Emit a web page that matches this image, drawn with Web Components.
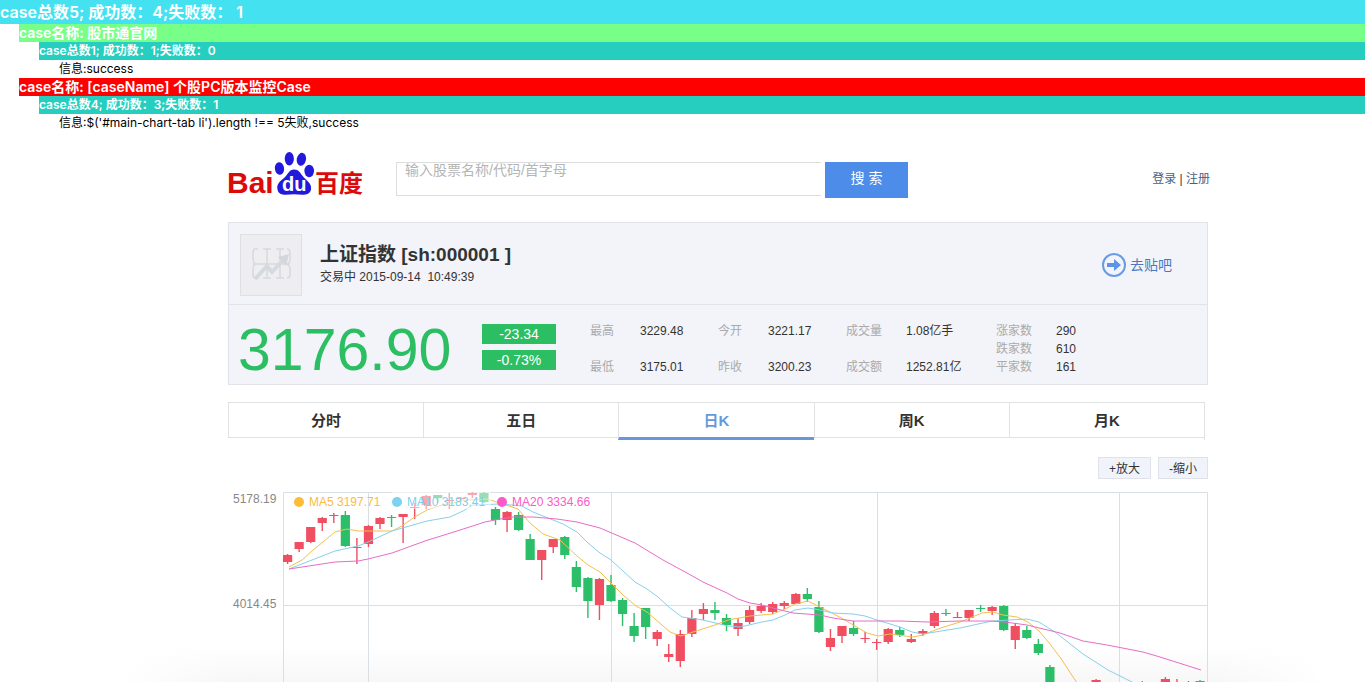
<!DOCTYPE html>
<html lang="zh-CN">
<head>
<meta charset="utf-8">
<title>股市通</title>
<style>
html,body{margin:0;padding:0;background:#fff}
body{font-family:"Liberation Sans","Noto Sans CJK SC",sans-serif;font-size:12px;color:#333}
</style>
</head>
<body>
<monitor-report>
  <report-row kind="total">case总数5; 成功数：4;失败数： 1</report-row>
  <report-row kind="pass">case名称: 股市通官网</report-row>
  <report-row kind="count">case总数1; 成功数：1;失败数：0</report-row>
  <report-row kind="info">信息:success</report-row>
  <report-row kind="fail">case名称: [caseName] 个股PC版本监控Case</report-row>
  <report-row kind="count">case总数4; 成功数：3;失败数：1</report-row>
  <report-row kind="info">信息:$('#main-chart-tab li').length !== 5失败,success</report-row>
</monitor-report>
<stock-page>
  <search-header></search-header>
  <stock-summary></stock-summary>
  <chart-tabs></chart-tabs>
  <k-chart></k-chart>
</stock-page>
<script>
const define = (name, html, setup) => customElements.define(name, class extends HTMLElement {
  constructor() {
    super();
    const t = document.createElement('template');
    t.innerHTML = html;
    this.attachShadow({mode: 'open'}).append(t.content.cloneNode(true));
    if (setup) setup(this.shadowRoot);
  }
});

define('monitor-report', `<style>:host{display:block;font-family:"Century Gothic","Inter","Noto Sans CJK SC",sans-serif}</style><slot></slot>`);

define('report-row', `<style>
:host{display:block;height:18px;line-height:18px;white-space:nowrap;color:#fff;font-weight:600}
:host([kind=total]){height:24px;line-height:24px;font-size:16px;background:#44e2f1}
:host([kind=pass]),:host([kind=fail]){margin-left:19px;font-size:14px}
:host([kind=pass]){background:#78ff88}
:host([kind=fail]){background:#f00}
:host([kind=count]){margin-left:39px;font-size:12px;background:#25cebe}
:host([kind=info]){margin-left:59px;font-size:12px;font-weight:400;color:#000}
</style><slot></slot>`);

define('stock-page', `<style>
:host{display:block;padding-left:71px;background:linear-gradient(90deg,#fff 9%,#fff0 17%,#fff0 89%,#fff 97%),linear-gradient(0deg,#f7f7f7,#fff 36px)}
main{max-width:980px;margin:0 auto}
</style><main><slot></slot></main>`);

define('search-header', `<style>
:host{display:flex;align-items:flex-start;height:72px;padding-top:18px}
.logo{display:block;width:136px;height:46px;margin-right:32px}
.logo svg{display:block;overflow:visible}
form{display:flex;margin-top:12px}
input{box-sizing:border-box;width:425px;height:34px;border:1px solid #ddd;border-right:0;padding:0 8px 18px;font:14px/14px "Liberation Sans","Noto Sans CJK SC",sans-serif;outline:0;border-radius:0;background:#fff}
input::placeholder{color:#b5b5b5}
button{width:83px;height:36px;margin:0 0 0 4px;border:0;padding:0 0 6px;background:#4d8ce8;color:#fff;font:14px "Liberation Sans","Noto Sans CJK SC",sans-serif;white-space:pre}
nav{margin:20px -2px 0 auto;line-height:18px;white-space:nowrap}
a{color:#4b5f82;text-decoration:none}
</style>
<a class="logo" href="#" aria-label="百度">
<svg width="136" height="46" viewBox="0 0 136 46">
<g fill="#2319dc">
<ellipse cx="51.500" cy="18.500" rx="4.600" ry="6.400" transform="rotate(-8 51.500 18.500)"/>
<ellipse cx="61.300" cy="8.700" rx="4.600" ry="6.700"/>
<ellipse cx="73.400" cy="9.300" rx="4.600" ry="6.500" transform="rotate(12 73.400 9.300)"/>
<ellipse cx="81.200" cy="21" rx="4.800" ry="6.200"/>
<path d="M66 19.500C61 19.500 60 24.500 56 28C51 32 48.500 34.500 49.500 39.500C51 46 57 45 66 44.300C75 45 81.500 46 83 39.500C84 33.500 79 31 75.500 27C72 23 71 19.500 66 19.500Z"/></g>
<text x="54" y="41" font-family="Liberation Sans" font-size="20" font-weight="700" fill="#fff">du</text>
<text x="-1" y="43" font-family="Liberation Sans" font-size="30" font-weight="700" fill="#dc0a0a">Bai</text>
<text x="87" y="42" font-family="Noto Sans CJK SC" font-size="24" font-weight="700" fill="#dc0a0a">百度</text>
</svg></a>
<form onsubmit="return false"><input type="text" aria-label="股票搜索" placeholder="输入股票名称/代码/首字母"><button type="submit">搜 索</button></form>
<nav><a href="#">登录</a> | <a href="#">注册</a></nav>`);

define('stock-summary', `<style>
:host{display:block;box-sizing:border-box;border:1px solid #e1e3e8;background:#f3f4f9}
header{display:flex;align-items:center;box-sizing:border-box;height:82px;padding:2px 35px 0 11px;border-bottom:1px solid #e1e3e8}
.pic{box-sizing:border-box;width:62px;height:62px;border:1px solid #dfe0e4;background:#eeeef0;margin-right:18px}
.pic svg{display:block}
h1{margin:0;font-size:19px;line-height:24px}
p{margin:0;line-height:20px;white-space:pre}
.bar{display:flex;align-items:center;gap:4px;margin-left:auto;font-size:14px;line-height:18px;color:#4a78bf;text-decoration:none}
section{display:flex;height:79px;align-items:flex-start}
.price{width:253px;box-sizing:border-box;padding:15px 0 0 9px;font-size:59px;line-height:60px;color:#2cbe63}
.chg{width:74px;display:grid;gap:6px;margin:19px 34px 0 0}
.chg span{background:#2cbe63;color:#fff;font-size:14px;line-height:20px;text-align:center}
table{border-collapse:collapse;margin-top:17px;table-layout:fixed;width:516px}
th,td{padding:0;line-height:18px;height:18px;text-align:left;font-weight:400;white-space:nowrap}
th{color:#aaa}
</style>
<header><div class="pic"><svg width="60" height="60" viewBox="0 0 60 60" fill="none" stroke="#d6d9dd">
<path stroke-width="1.500" d="M17 14H14Q12 14 12 18V24Q12 27 14 29Q12 31 12 34V40Q12 43 15 43H18M12 29H49M12 18V24M22 14H30M26 14V43M22 43H30M35 14H43M39 14V43M35 43H43M46 14Q49 14 49 18V24Q49 28 46 29Q49 31 49 34V40Q49 43 46 43"/>
<path stroke-width="4" d="M14 44L26 31L31 37L43 24"/><path fill="#d3d6db" stroke="none" d="M37 22L48 19L45 31Z"/></svg></div>
<div><h1>上证指数 [sh:000001 ]</h1><p>交易中 2015-09-14  10:49:39</p></div>
<a class="bar" href="#"><svg width="24" height="24" viewBox="0 0 24 24"><circle cx="12" cy="12" r="11" fill="none" stroke="#699be3" stroke-width="2"/><path fill="#5b94e8" d="M5 10H12V6L19 12L12 18V14H5Z"/></svg>去贴吧</a></header>
<section><div class="price">3176.90</div><div class="chg"><span>-23.34</span><span>-0.73%</span></div>
<table><colgroup><col style="width:50px"><col style="width:78px"><col style="width:50px"><col style="width:78px"><col style="width:60px"><col style="width:90px"><col style="width:60px"><col style="width:50px"></colgroup>
<tr><th>最高</th><td>3229.48</td><th>今开</th><td>3221.17</td><th>成交量</th><td>1.08亿手</td><th>涨家数</th><td>290</td></tr>
<tr><td></td><td></td><td></td><td></td><td></td><td></td><th>跌家数</th><td>610</td></tr>
<tr><th>最低</th><td>3175.01</td><th>昨收</th><td>3200.23</td><th>成交额</th><td>1252.81亿</td><th>平家数</th><td>161</td></tr>
</table></section>`);

define('chart-tabs', `<style>
:host{display:block;margin-top:17px}
.tabs{display:grid;grid-template-columns:repeat(5,1fr);height:38px;margin-right:3px;border-right:1px solid #e0e2e4}
.tabs button{box-sizing:border-box;height:36px;margin:0;padding:0 0 2px;border:solid #e0e2e4;border-width:1px 0 1px 1px;background:#fff;color:#333;font:700 15px "Liberation Sans","Noto Sans CJK SC",sans-serif}
.tabs button[aria-selected=true]{height:38px;border-bottom:3px solid #6898dc;color:#6898dc}
.zoom{display:flex;justify-content:flex-end;gap:7px;margin-top:17px}
.zoom button{box-sizing:border-box;height:22px;padding:0 10px 2px;border:1px solid #dfe2ea;background:#f0f3fa;color:#333;font:12px "Liberation Sans","Noto Sans CJK SC",sans-serif}
</style>
<div class="tabs" role="tablist"><button role="tab">分时</button><button role="tab">五日</button><button role="tab" aria-selected="true">日K</button><button role="tab">周K</button><button role="tab">月K</button></div>
<div class="zoom"><button>+放大</button><button>-缩小</button></div>`);

// Each candle: direction, body top, body bottom, wick top, wick bottom.
const candles = `r 555 562 554 564|r 542 549 542 552|r 527 542 527 543|r 518 523 517 531|r 515 516 513 523|g 515 546 511 547|r 547 548 538 564|r 526 544 525 547|r 518 524 517 529|g 517 518 515 527|r 514 517 514 543|r 507 508 503 519|r 496 505 495 509|g 495 498 495 503|r 500 501 493 509|r 498 499 497 502|r 493 495 492 498|g 493 502 492 503|g 509 520 507 525|r 512 520 511 532|g 515 530 512 531|g 539 560 534 560|r 550 560 550 580|r 539 547 539 553|g 537 555 536 559|g 567 587 561 592|g 578 601 577 618|r 579 605 578 620|g 585 601 575 602|g 600 614 598 626|g 626 636 613 642|g 608 627 608 639|r 632 639 630 646|r 654 657 644 662|r 634 661 630 667|r 618 634 610 637|r 609 614 603 620|g 610 613 602 620|g 618 625 614 631|r 623 629 618 636|r 610 622 606 624|r 606 611 603 613|r 604 612 602 614|r 603 606 601 609|r 594 604 593 604|g 594 599 588 602|g 607 632 601 633|r 638 647 629 651|r 626 636 626 643|g 628 634 621 636|r 638 639 632 643|r 642 643 639 650|r 629 642 628 644|g 630 635 627 637|r 639 642 634 643|r 631 634 629 636|r 613 626 611 628|g 613 614 609 616|r 617 618 612 618|r 610 618 610 621|g 608 609 605 612|r 607 611 606 615|g 606 630 605 631|r 626 640 623 649|g 630 638 626 639|g 644 653 639 655|g 667 690 665 690||||r 680 690 679 690||||g 690 691 681 691||r 679 690 677 690|r 690 691 679 690|r 690 691 681 690|g 681 690 680 690`.split('|');
const lines = {
  '#f4bf4f': '289,567 302,560 312,551 335,532 347,529 358,531 392,531 402,526 413,518 427,510 442,505 467,500 487,499 500,503 518,509 530,523 543,534 560,540 577,556 588,565 600,572 612,584 623,595 636,606 647,612 670,632 681,636 693,632 715,625 728,620 750,616 773,614 785,609 795,604 808,601 820,607 832,613 843,619 855,626 867,633 878,636 890,634 913,637 923,635 935,630 947,626 960,622 982,613 993,612 1003,615 1017,617 1028,622 1039,631 1050,644 1062,660 1073,677 1078,684',
  '#88cfea': '289,569 312,560 335,551 358,546 368,542 392,531 427,521 450,517 463,511 473,505 500,504 522,506 533,512 563,524 577,532 588,543 600,553 611,560 623,571 635,582 647,589 658,597 670,608 682,617 703,620 728,626 740,627 762,622 773,620 785,615 795,610 808,608 820,610 833,613 853,614 865,616 877,620 900,627 912,632 923,634 935,632 960,628 992,621 1027,619 1039,622 1055,632 1083,654 1108,670 1134,683',
  '#e86cc8': '289,569 335,562 358,561 368,559 392,553 425,541 457,531 485,522 500,519 513,517 533,517 557,519 577,522 600,528 635,543 663,560 687,573 703,582 727,593 738,599 750,603 762,605 773,608 793,613 820,615 833,618 853,621 877,621 900,621 927,622 960,621 990,621 1005,622 1027,625 1060,633 1083,641 1107,645 1143,652 1160,657 1201,670'
};
define('k-chart', `<style>
:host{display:block;padding-top:8px;overflow:hidden}
svg{display:block;width:100%;height:auto}
text{font-family:"Liberation Sans",sans-serif;font-size:12px}
.axis{fill:#888}
</style><svg viewBox="228 487 980 195" role="img" aria-label="日K线图">
<path d="M283.500 682V492.500H1207.500V682M283.500 605.500H1207.500M368.500 492V682M611.500 492V682M877.500 492V682M1119.500 492V682" fill="none" stroke="#dadfe3"/>
<g id="plot"></g><rect x="392" y="490" width="99" height="19" fill="#fff" fill-opacity=".5"/>
<text class="axis" x="233" y="503">5178.19</text><text class="axis" x="233" y="608">4014.45</text>
<g fill="#fcbc36"><circle cx="299" cy="502" r="5"/><text x="309" y="506">MA5 3197.71</text></g>
<g fill="#7dd1f1"><circle cx="397" cy="502" r="5"/><text x="407" y="506">MA10 3183.41</text></g>
<g fill="#fb5bc8"><circle cx="502" cy="502" r="5"/><text x="512" y="506">MA20 3334.66</text></g>
</svg>`, root => {
  let s = '';
  candles.forEach((c, i) => {
    if (!c) return;
    const [k, a, b, t, u] = c.split(' ');
    const x = 287.6 + i * 11.55;
    const f = k === 'r' ? '#ef4f60' : '#2cbe69';
    s += `<g fill="${f}"><rect x="${x - 4.6}" y="${a}" width="9.2" height="${b - a}"/><rect x="${x - .7}" y="${t}" width="1.4" height="${u - t}"/></g>`;
  });
  for (const [c, p] of Object.entries(lines)) s += `<polyline points="${p}" fill="none" stroke="${c}" stroke-linejoin="round"/>`;
  root.getElementById('plot').innerHTML = s;
});
</script>
</body>
</html>
